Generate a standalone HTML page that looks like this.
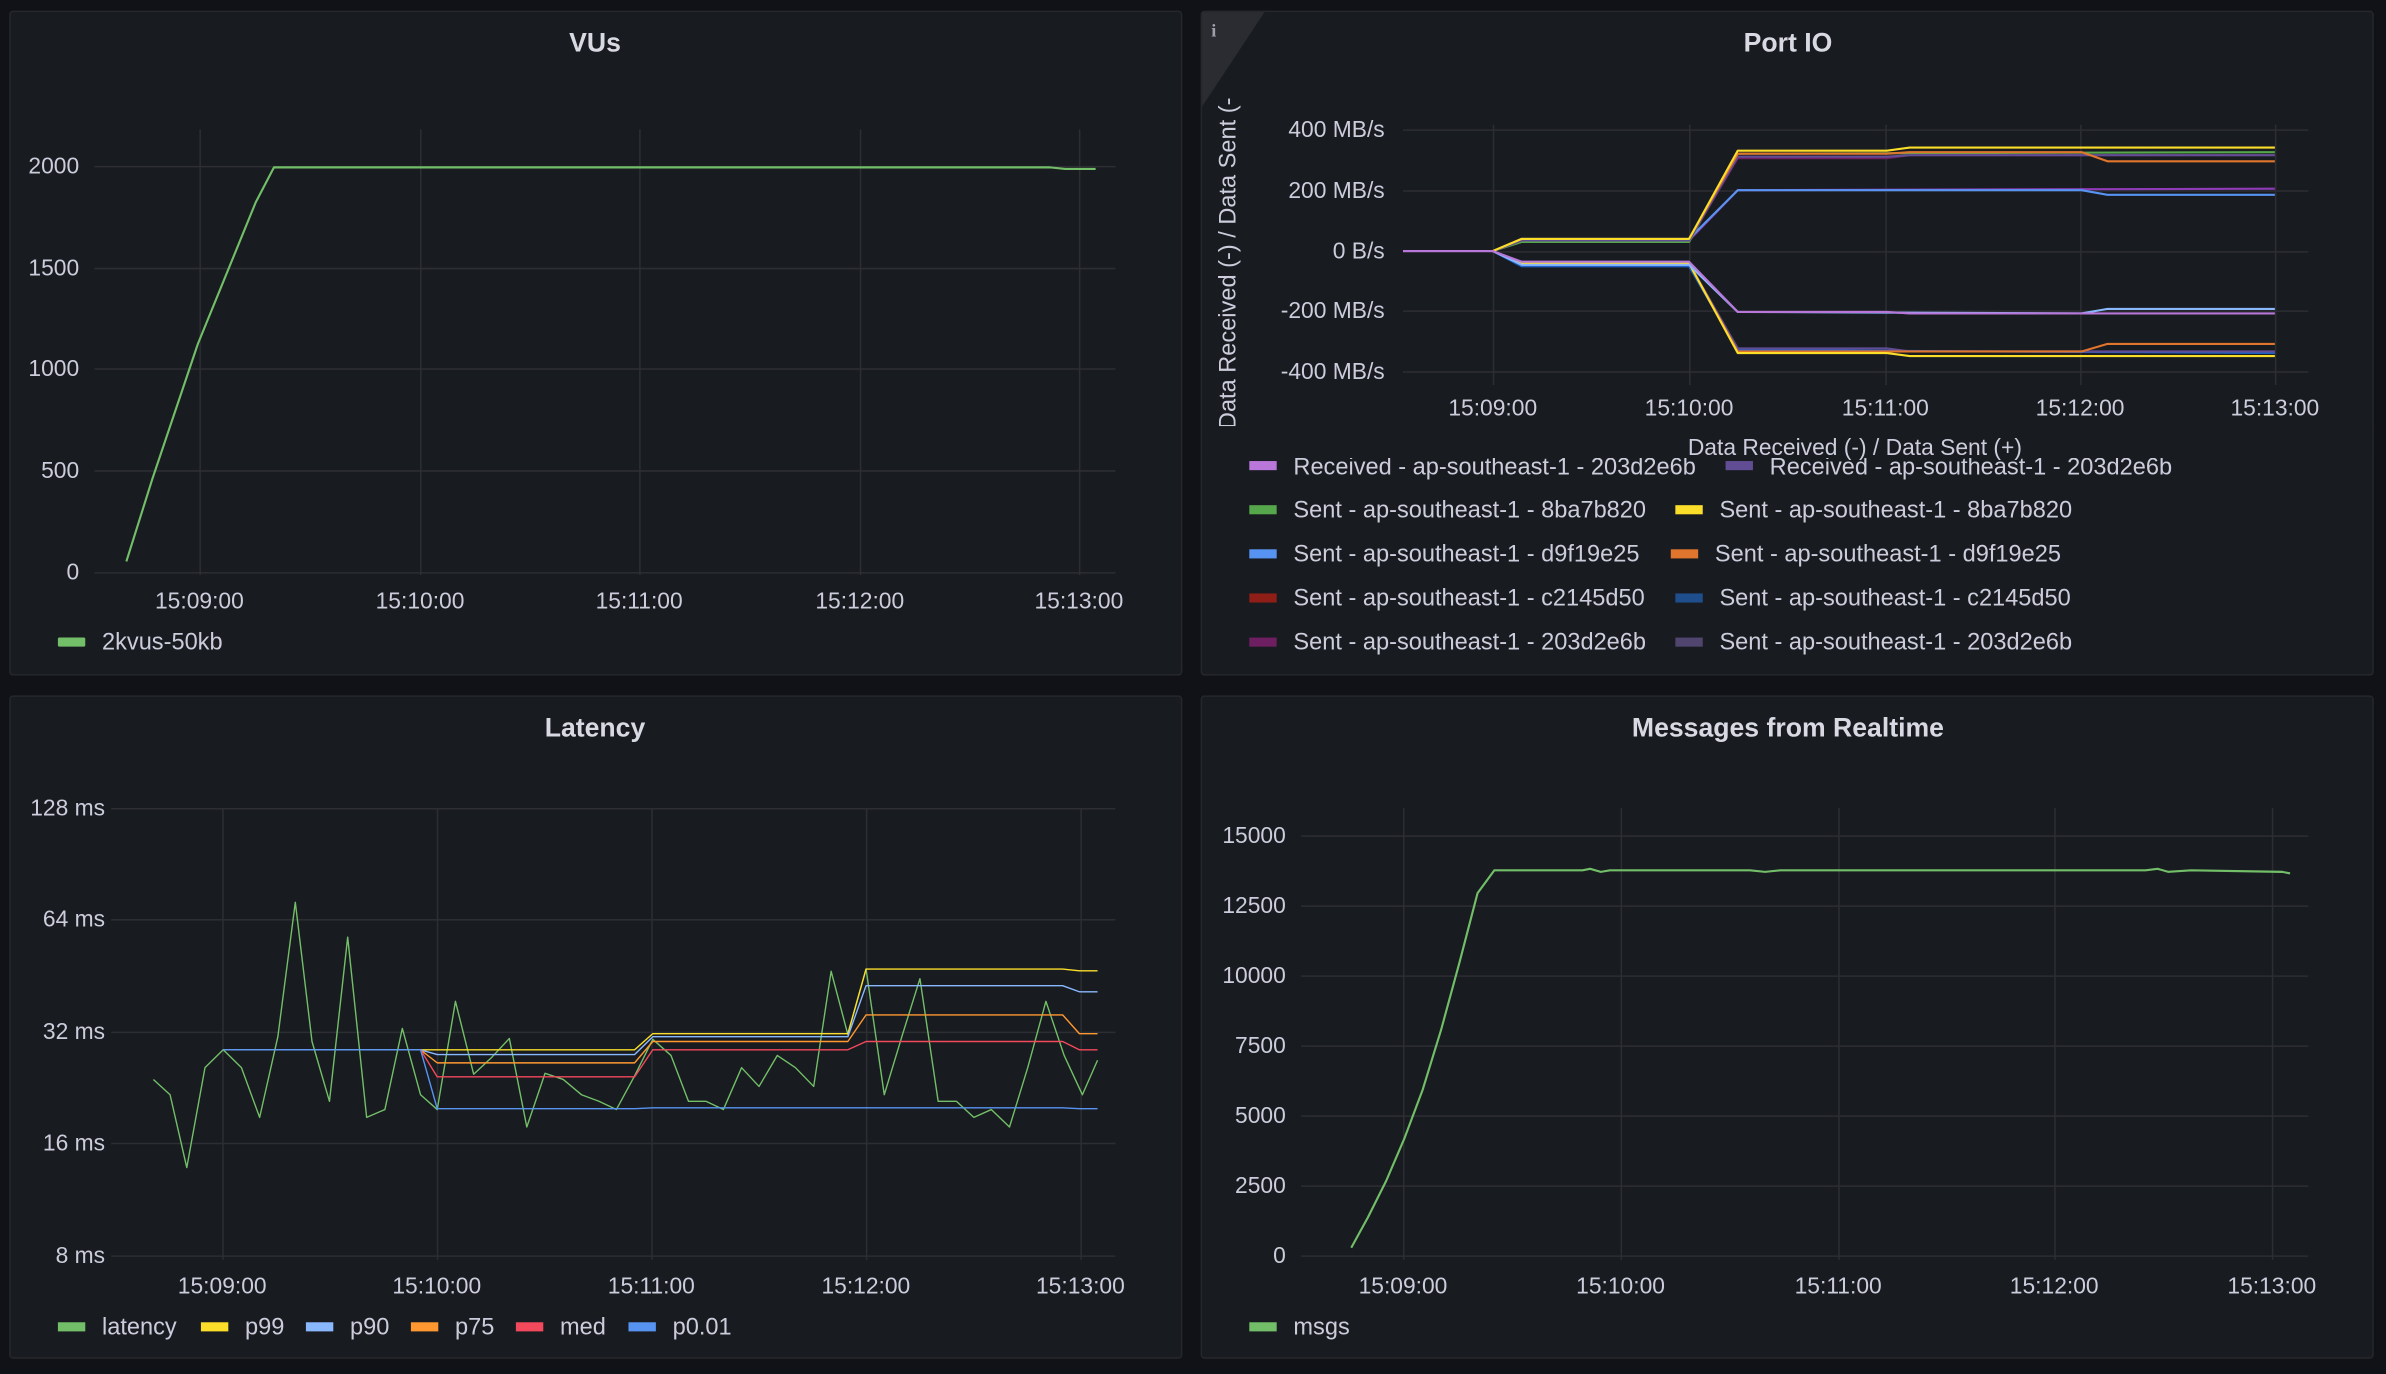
<!DOCTYPE html>
<html><head><meta charset="utf-8"><style>
html,body{margin:0;padding:0;background:#111217;width:2386px;height:1374px;overflow:hidden}
svg{display:block}
text{font-family:"Liberation Sans",sans-serif;fill:#ccccdc}
.t{font-size:17.5px;font-weight:bold;text-anchor:middle;fill:#d8d9e3}
.y{font-size:15px;text-anchor:end}
.x{font-size:15px;text-anchor:middle}
.l{font-size:15.5px}
.g line{stroke:#2c2e33;stroke-width:1}
polyline{fill:none;stroke-width:1.4;stroke-linejoin:round}
.nb polyline{vector-effect:non-scaling-stroke}
</style></head><body>
<svg width="2386" height="1374" viewBox="0 0 1568 903" xmlns="http://www.w3.org/2000/svg">
<rect width="1568" height="903" fill="#111217"/>
<!-- panels -->
<rect x="6.5" y="7.5" width="770" height="436" rx="2" fill="#181b1f" stroke="#25272c"/>
<rect x="789.5" y="7.5" width="770" height="436" rx="2" fill="#181b1f" stroke="#25272c"/>
<rect x="6.5" y="457.5" width="770" height="435" rx="2" fill="#181b1f" stroke="#25272c"/>
<rect x="789.5" y="457.5" width="770" height="435" rx="2" fill="#181b1f" stroke="#25272c"/>

<!-- VUs -->
<text class="t" x="391" y="34">VUs</text>
<g class="g">
<line x1="62" x2="733" y1="109.5" y2="109.5"/><line x1="62" x2="733" y1="176.5" y2="176.5"/><line x1="62" x2="733" y1="242.5" y2="242.5"/><line x1="62" x2="733" y1="309.5" y2="309.5"/><line x1="62" x2="733" y1="376.5" y2="376.5"/>
<line x1="131.5" x2="131.5" y1="85" y2="378"/><line x1="276.5" x2="276.5" y1="85" y2="378"/><line x1="420.5" x2="420.5" y1="85" y2="378"/><line x1="565.5" x2="565.5" y1="85" y2="378"/><line x1="709.5" x2="709.5" y1="85" y2="378"/>
</g>
<text class="y" x="52" y="114">2000</text><text class="y" x="52" y="181">1500</text><text class="y" x="52" y="247">1000</text><text class="y" x="52" y="314">500</text><text class="y" x="52" y="381">0</text>
<text class="x" x="131" y="400">15:09:00</text><text class="x" x="276" y="400">15:10:00</text><text class="x" x="420" y="400">15:11:00</text><text class="x" x="565" y="400">15:12:00</text><text class="x" x="709" y="400">15:13:00</text>
<polyline stroke="#73bf69" points="83,369 100,315 130,226 168,133 180,110 690,110 700,111 720,111"/>
<rect x="38" y="419" width="18" height="6" rx="1" fill="#73bf69"/><text class="l" x="67" y="427">2kvus-50kb</text>

<!-- Port IO -->
<path d="M790,8 L831,8 L790,70 Z" fill="#2a2c31"/>
<text x="796" y="24" style="font-size:12px;font-weight:bold;fill:#9fa1a8;font-family:'Liberation Serif',serif">i</text>
<text class="t" x="1175" y="34">Port IO</text>
<g class="g">
<line x1="922" x2="1517" y1="85.5" y2="85.5"/><line x1="922" x2="1517" y1="125.5" y2="125.5"/><line x1="922" x2="1517" y1="165.5" y2="165.5"/><line x1="922" x2="1517" y1="204.5" y2="204.5"/><line x1="922" x2="1517" y1="244.5" y2="244.5"/>
<line x1="981.5" x2="981.5" y1="82" y2="253"/><line x1="1110.5" x2="1110.5" y1="82" y2="253"/><line x1="1239.5" x2="1239.5" y1="82" y2="253"/><line x1="1367.5" x2="1367.5" y1="82" y2="253"/><line x1="1495.5" x2="1495.5" y1="82" y2="253"/>
</g>
<text class="y" x="910" y="90">400 MB/s</text><text class="y" x="910" y="130">200 MB/s</text><text class="y" x="910" y="170">0 B/s</text><text class="y" x="910" y="209">-200 MB/s</text><text class="y" x="910" y="249">-400 MB/s</text>
<text class="x" x="981" y="273">15:09:00</text><text class="x" x="1110" y="273">15:10:00</text><text class="x" x="1239" y="273">15:11:00</text><text class="x" x="1367" y="273">15:12:00</text><text class="x" x="1495" y="273">15:13:00</text>
<text class="l" transform="translate(812,282) rotate(-90)">Data Received (-) / Data Sent (-</text>
<polyline stroke="#8f3bb8" points="922,165 981,165 1000,158 1110,158 1142,125 1495,124"/>
<polyline stroke="#5794f2" points="981,165 1000,157 1110,157 1142,125 1368,125 1385,128 1495,128"/>
<polyline stroke="#56a64b" points="981,165 1000,159 1110,159 1142,101 1495,100"/>
<polyline stroke="#6d1f62" points="981,165 1000,158 1110,158 1142,104 1240,104 1255,102 1495,102"/>
<polyline stroke="#614d93" points="981,165 1000,158 1110,158 1142,103 1240,103 1255,102 1495,102"/>
<polyline stroke="#e0752d" points="981,165 1000,157 1110,157 1142,101 1240,101 1255,100 1368,100 1385,106 1495,106"/>
<polyline stroke="#fade2a" points="981,165 1000,157 1110,157 1142,99 1240,99 1255,97 1495,97"/>
<polyline stroke="#1f60c4" points="981,165 1000,175 1110,175 1142,230 1495,232"/>
<polyline stroke="#614d93" points="981,165 1000,173 1110,173 1142,229 1240,229 1255,231 1495,231"/>
<polyline stroke="#e0752d" points="981,165 1000,173 1110,173 1142,231 1368,231 1385,226 1495,226"/>
<polyline stroke="#fade2a" points="981,165 1000,173 1110,173 1142,232 1240,232 1255,234 1495,234"/>
<polyline stroke="#8ab8ff" points="981,165 1000,174 1110,174 1142,205 1368,206 1385,203 1495,203"/>
<polyline stroke="#b877d9" points="922,165 981,165 1000,172 1110,172 1142,205 1240,205 1255,206 1495,206"/>
<g>
<rect x="821" y="303" width="18" height="6" fill="#b877d9"/><text class="l" x="850" y="312">Received - ap-southeast-1 - 203d2e6b</text>
<rect x="1134" y="303" width="18" height="6" fill="#614d93"/><text class="l" x="1163" y="312">Received - ap-southeast-1 - 203d2e6b</text>
<rect x="821" y="332" width="18" height="6" fill="#56a64b"/><text class="l" x="850" y="340">Sent - ap-southeast-1 - 8ba7b820</text>
<rect x="1101" y="332" width="18" height="6" fill="#fade2a"/><text class="l" x="1130" y="340">Sent - ap-southeast-1 - 8ba7b820</text>
<rect x="821" y="361" width="18" height="6" fill="#5794f2"/><text class="l" x="850" y="369">Sent - ap-southeast-1 - d9f19e25</text>
<rect x="1098" y="361" width="18" height="6" fill="#e0752d"/><text class="l" x="1127" y="369">Sent - ap-southeast-1 - d9f19e25</text>
<rect x="821" y="390" width="18" height="6" fill="#8f1e16"/><text class="l" x="850" y="398">Sent - ap-southeast-1 - c2145d50</text>
<rect x="1101" y="390" width="18" height="6" fill="#1f4e8c"/><text class="l" x="1130" y="398">Sent - ap-southeast-1 - c2145d50</text>
<rect x="821" y="419" width="18" height="6" fill="#6d1f62"/><text class="l" x="850" y="427">Sent - ap-southeast-1 - 203d2e6b</text>
<rect x="1101" y="419" width="18" height="6" fill="#4f456e"/><text class="l" x="1130" y="427">Sent - ap-southeast-1 - 203d2e6b</text>
</g>
<rect x="790" y="280" width="769" height="21" fill="#181b1f"/>
<text class="x" x="1219" y="299">Data Received (-) / Data Sent (+)</text>

<!-- Latency -->
<text class="t" x="391" y="484">Latency</text>
<g class="g">
<line x1="73" x2="733" y1="531.5" y2="531.5"/><line x1="73" x2="733" y1="604.5" y2="604.5"/><line x1="73" x2="733" y1="678.5" y2="678.5"/><line x1="73" x2="733" y1="751.5" y2="751.5"/><line x1="73" x2="733" y1="825.5" y2="825.5"/>
<line x1="146.5" x2="146.5" y1="531" y2="828"/><line x1="287.5" x2="287.5" y1="531" y2="828"/><line x1="428.5" x2="428.5" y1="531" y2="828"/><line x1="569.5" x2="569.5" y1="531" y2="828"/><line x1="710.5" x2="710.5" y1="531" y2="828"/>
</g>
<text class="y" x="69" y="536">128 ms</text><text class="y" x="69" y="609">64 ms</text><text class="y" x="69" y="683">32 ms</text><text class="y" x="69" y="756">16 ms</text><text class="y" x="69" y="830">8 ms</text>
<text class="x" x="146" y="850">15:09:00</text><text class="x" x="287" y="850">15:10:00</text><text class="x" x="428" y="850">15:11:00</text><text class="x" x="569" y="850">15:12:00</text><text class="x" x="710" y="850">15:13:00</text>
<g class="nb" transform="translate(0,453.4) scale(0.4988,0.2867)">
<polyline stroke="#73bf69" points="202,893 224,928 246,1095 270,866 294,825 318,866 342,980 366,795 389,487 411,806 434,943 458,567 483,980 507,962 530,776 554,928 576,962 600,714 624,881 648,842 671,799 694,1002 718,879 742,893 766,928 789,943 812,962 836,885 860,801 884,838 907,943 930,943 953,962 977,866 1000,909 1024,838 1048,866 1072,909 1095,645 1117,790 1141,640 1165,928 1189,790 1212,662 1236,943 1260,943 1283,980 1306,962 1330,1002 1354,866 1378,714 1402,838 1426,928 1446,849"/>
<polyline stroke="#fade2a" points="294,825 836,825 860,788 1117,788 1141,640 1400,640 1422,644 1446,644"/>
<polyline stroke="#8ab8ff" points="294,825 554,825 576,836 836,836 860,795 1117,795 1141,678 1400,678 1422,692 1446,692"/>
<polyline stroke="#ff9830" points="554,825 576,855 836,855 860,806 1117,806 1141,745 1400,745 1422,788 1446,788"/>
<polyline stroke="#f2495c" points="554,825 576,887 836,887 860,825 1117,825 1141,806 1400,806 1422,825 1446,825"/>
<polyline stroke="#5794f2" points="294,825 554,825 576,960 836,960 860,958 1400,958 1422,960 1446,960"/>
</g>
<rect x="38" y="869" width="18" height="6" fill="#73bf69"/><text class="l" x="67" y="877">latency</text>
<rect x="132" y="869" width="18" height="6" fill="#fade2a"/><text class="l" x="161" y="877">p99</text>
<rect x="201" y="869" width="18" height="6" fill="#8ab8ff"/><text class="l" x="230" y="877">p90</text>
<rect x="270" y="869" width="18" height="6" fill="#ff9830"/><text class="l" x="299" y="877">p75</text>
<rect x="339" y="869" width="18" height="6" fill="#f2495c"/><text class="l" x="368" y="877">med</text>
<rect x="413" y="869" width="18" height="6" fill="#5794f2"/><text class="l" x="442" y="877">p0.01</text>

<!-- Messages -->
<text class="t" x="1175" y="484">Messages from Realtime</text>
<g class="g">
<line x1="855" x2="1517" y1="549.5" y2="549.5"/><line x1="855" x2="1517" y1="595.5" y2="595.5"/><line x1="855" x2="1517" y1="641.5" y2="641.5"/><line x1="855" x2="1517" y1="687.5" y2="687.5"/><line x1="855" x2="1517" y1="733.5" y2="733.5"/><line x1="855" x2="1517" y1="779.5" y2="779.5"/><line x1="855" x2="1517" y1="825.5" y2="825.5"/>
<line x1="922.5" x2="922.5" y1="531" y2="828"/><line x1="1065.5" x2="1065.5" y1="531" y2="828"/><line x1="1208.5" x2="1208.5" y1="531" y2="828"/><line x1="1350.5" x2="1350.5" y1="531" y2="828"/><line x1="1493.5" x2="1493.5" y1="531" y2="828"/>
</g>
<text class="y" x="845" y="554">15000</text><text class="y" x="845" y="600">12500</text><text class="y" x="845" y="646">10000</text><text class="y" x="845" y="692">7500</text><text class="y" x="845" y="738">5000</text><text class="y" x="845" y="784">2500</text><text class="y" x="845" y="830">0</text>
<text class="x" x="922" y="850">15:09:00</text><text class="x" x="1065" y="850">15:10:00</text><text class="x" x="1208" y="850">15:11:00</text><text class="x" x="1350" y="850">15:12:00</text><text class="x" x="1493" y="850">15:13:00</text>
<polyline stroke="#73bf69" points="888,820 899,800 911,776 923,748 935,716 947,677 959,633 971,587 982,572 1040,572 1045,571 1052,573 1058,572 1150,572 1160,573 1170,572 1410,572 1418,571 1425,573 1440,572 1500,573 1505,574"/>
<rect x="821" y="869" width="18" height="6" fill="#73bf69"/><text class="l" x="850" y="877">msgs</text>
</svg>
</body></html>
